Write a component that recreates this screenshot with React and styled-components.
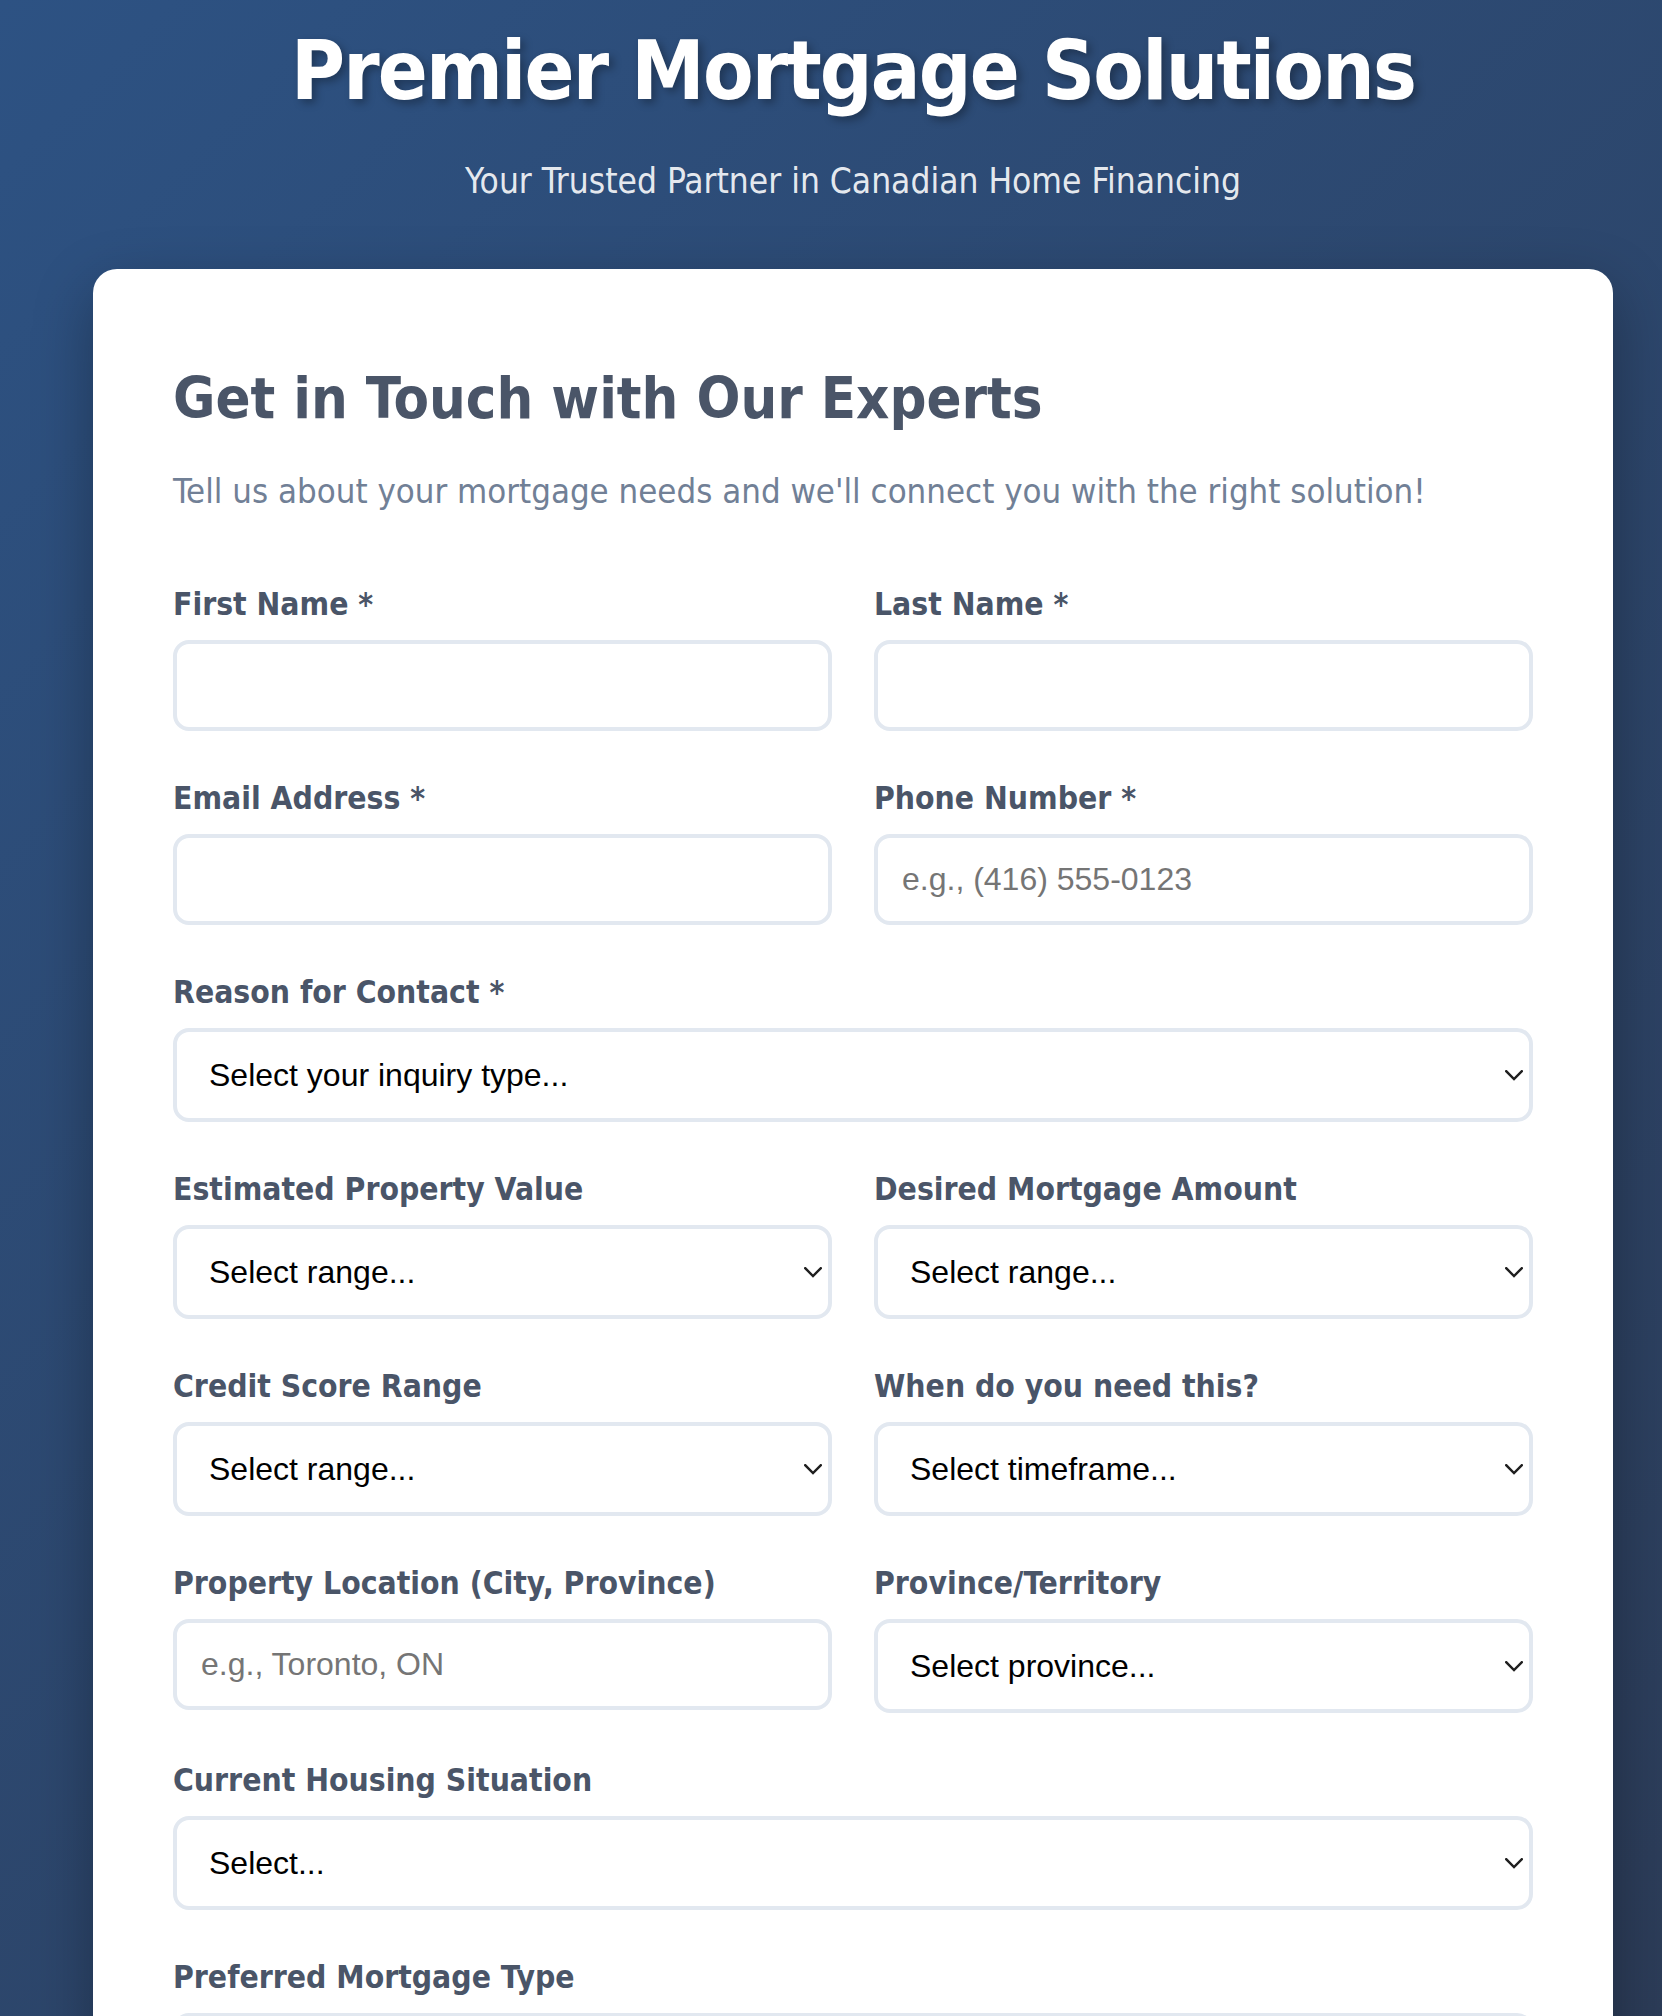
import React from "react";
import styled, { createGlobalStyle } from "styled-components";

const GlobalStyle = createGlobalStyle`
  html, body { margin: 0; padding: 0; }
  body {
    min-height: 100vh;
    background: linear-gradient(135deg, #2d5283 0%, #2c3b56 100%);
    font-family: "DejaVu Sans Condensed", "DejaVu Sans", sans-serif;
  }
  * { box-sizing: border-box; }
`;

const Page = styled.div`
  padding: 0 49px 0 93px;
`;

const Header = styled.header`
  text-align: center;
  padding-top: 20px;
  margin-bottom: 66px;
`;

const Title = styled.h1`
  margin: 0 0 39px;
  font-size: 82px;
  line-height: 101px;
  letter-spacing: -1.8px;
  font-weight: 700;
  color: #ffffff;
  text-shadow: 4px 4px 8px rgba(0, 0, 0, 0.3);
`;

const Tagline = styled.p`
  margin: 0;
  font-size: 35px;
  line-height: 43px;
  color: rgba(255, 255, 255, 0.9);
`;

const Card = styled.main`
  background: #ffffff;
  border-radius: 24px;
  padding: 94px 80px 80px;
  box-shadow: 0 20px 60px rgba(0, 0, 0, 0.3);
`;

const Heading = styled.h2`
  margin: 0 0 37px;
  font-size: 57.5px;
  line-height: 71px;
  font-weight: 700;
  color: #4a5568;
`;

const Intro = styled.p`
  margin: 0 0 73px;
  font-size: 34.5px;
  line-height: 41px;
  color: #718096;
`;

const Form = styled.form`
  display: flex;
  flex-direction: column;
  gap: 48px;
`;

const Row = styled.div`
  display: grid;
  grid-template-columns: 1fr 1fr;
  column-gap: 42px;
`;

const Group = styled.div`
  display: flex;
  flex-direction: column;
`;

const Label = styled.label`
  display: block;
  margin-bottom: 17px;
  font-size: 31.6px;
  line-height: 38px;
  font-weight: 700;
  color: #4a5568;
`;

const fieldBase = `
  width: 100%;
  border: 4px solid #e2e8f0;
  border-radius: 16px;
  background: #ffffff;
  font-family: "Liberation Sans", Arial, sans-serif;
  font-size: 32px;
  color: #000000;
  outline: none;
`;

const Input = styled.input`
  ${fieldBase}
  height: 91px;
  padding: 0 24px;
  &::placeholder { color: #757575; }
`;

const SelectWrap = styled.div`
  position: relative;
`;

const Select = styled.select`
  ${fieldBase}
  appearance: none;
  -webkit-appearance: none;
  height: 94px;
  padding: 0 60px 0 32px;
`;

const Chevron = styled.svg`
  position: absolute;
  right: 10px;
  top: 50%;
  width: 18px;
  height: 11px;
  margin-top: -5px;
  pointer-events: none;
`;

function Field({ label, placeholder, type = "text" }) {
  return (
    <Group>
      <Label>{label}</Label>
      <Input type={type} placeholder={placeholder} />
    </Group>
  );
}

function SelectField({ label, first }) {
  return (
    <Group>
      <Label>{label}</Label>
      <SelectWrap>
        <Select defaultValue="">
          <option value="">{first}</option>
        </Select>
        <Chevron viewBox="0 0 18 11" fill="none">
          <path d="M1.2 1.2 L9 9 L16.8 1.2" stroke="#1f1f1f" strokeWidth="2.4" strokeLinecap="square" />
        </Chevron>
      </SelectWrap>
    </Group>
  );
}

export default function App() {
  return (
    <>
      <GlobalStyle />
      <Page>
        <Header>
          <Title>Premier Mortgage Solutions</Title>
          <Tagline>Your Trusted Partner in Canadian Home Financing</Tagline>
        </Header>
        <Card>
          <Heading>Get in Touch with Our Experts</Heading>
          <Intro>Tell us about your mortgage needs and we'll connect you with the right solution!</Intro>
          <Form onSubmit={(e) => e.preventDefault()}>
            <Row>
              <Field label="First Name *" />
              <Field label="Last Name *" />
            </Row>
            <Row>
              <Field label="Email Address *" type="email" />
              <Field label="Phone Number *" type="tel" placeholder="e.g., (416) 555-0123" />
            </Row>
            <SelectField label="Reason for Contact *" first="Select your inquiry type..." />
            <Row>
              <SelectField label="Estimated Property Value" first="Select range..." />
              <SelectField label="Desired Mortgage Amount" first="Select range..." />
            </Row>
            <Row>
              <SelectField label="Credit Score Range" first="Select range..." />
              <SelectField label="When do you need this?" first="Select timeframe..." />
            </Row>
            <Row>
              <Field label="Property Location (City, Province)" placeholder="e.g., Toronto, ON" />
              <SelectField label="Province/Territory" first="Select province..." />
            </Row>
            <SelectField label="Current Housing Situation" first="Select..." />
            <SelectField label="Preferred Mortgage Type" first="Select..." />
          </Form>
        </Card>
      </Page>
    </>
  );
}
